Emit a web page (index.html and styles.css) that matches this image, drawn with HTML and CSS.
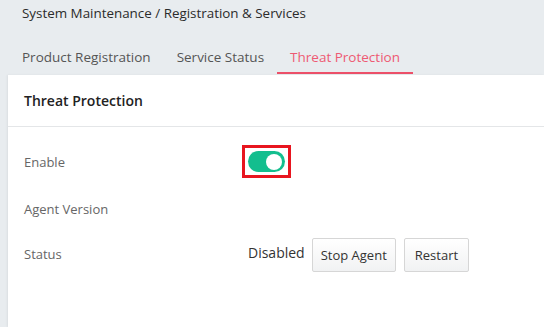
FILE: index.html
```html
<!DOCTYPE html>
<html>
<head>
<meta charset="utf-8">
<link rel="stylesheet" href="styles.css">
</head>
<body>
<div class="breadcrumb">System Maintenance / Registration &amp; Services</div>
<nav class="tabs">
  <div class="tab">Product Registration</div>
  <div class="tab">Service Status</div>
  <div class="tab active">Threat Protection</div>
</nav>
<section class="panel">
  <header class="panel-head">Threat Protection</header>
  <div class="panel-body">
    <div class="row row-enable">
      <div class="label">Enable</div>
      <div class="value">
        <span class="highlight"><span class="toggle"><span class="knob"></span></span></span>
      </div>
    </div>
    <div class="row row-version">
      <div class="label">Agent Version</div>
      <div class="value"></div>
    </div>
    <div class="row row-status">
      <div class="label">Status</div>
      <div class="value">
        <span class="status-text">Disabled</span>
        <button class="btn btn-stop">Stop Agent</button>
        <button class="btn btn-restart">Restart</button>
      </div>
    </div>
  </div>
</section>
</body>
</html>
```

FILE: styles.css
```css
html, body {
  margin: 0;
  height: 100%;
}
body {
  background: #e8ecef;
  font-family: "Open Sans", "Noto Sans", sans-serif;
  color: #333;
  overflow: hidden;
  display: flex;
  flex-direction: column;
}
.breadcrumb {
  font-size: 13.4px;
  line-height: 20px;
  padding: 3px 22px 0;
  color: #2b2b2b;
}
.tabs {
  display: flex;
  padding-left: 9px;
  margin-top: 20px;
}
.tab {
  font-size: 13.5px;
  line-height: 20px;
  padding: 4px 13px 5px;
  color: #555;
  border-bottom: 2px solid transparent;
}
.tab.active {
  color: #ee5a73;
  border-bottom-color: #ec5069;
}
.panel {
  margin: 1px 0 0 8px;
  background: #fff;
  flex: 1;
  box-shadow: -1px 0 2px rgba(0,0,0,0.06);
}
.panel-head {
  height: 51px;
  border-bottom: 1px solid #e4e6e8;
  display: flex;
  align-items: center;
  padding-left: 16px;
  font-size: 14px;
  font-weight: 600;
  color: #222;
}
.panel-body {
  padding-top: 11px;
}
.row {
  display: flex;
  align-items: center;
  padding-left: 16px;
}
.row-enable { height: 47px; }
.row-version { height: 48px; }
.row-status { height: 42px; }
.label {
  width: 224px;
  font-size: 13px;
  color: #666;
}
.value {
  display: flex;
  align-items: center;
  gap: 8px;
}
.highlight {
  display: inline-flex;
  outline: 3px solid #e8151f;
  outline-offset: 3px;
}
.toggle {
  display: inline-flex;
  width: 37px;
  height: 21px;
  border-radius: 11px;
  background: #13be8e;
  align-items: center;
  justify-content: flex-end;
  padding: 0 3px;
  box-sizing: border-box;
}
.knob {
  width: 16px;
  height: 16px;
  border-radius: 50%;
  background: #fff;
}
.status-text {
  font-size: 14px;
  color: #333;
  margin-top: -4px;
  margin-right: -1px;
}
.btn {
  font-family: "Open Sans", "Noto Sans", sans-serif;
  font-size: 13px;
  color: #333;
  height: 34px;
  padding: 0 9px;
  margin-top: 2px;
  border: 1px solid #d6d6d6;
  border-radius: 2px;
  background: linear-gradient(#ffffff, #f1f2f3);
}
.btn-stop {
  padding: 0 8px;
}
.btn-restart {
  padding: 0 10px;
}
```
